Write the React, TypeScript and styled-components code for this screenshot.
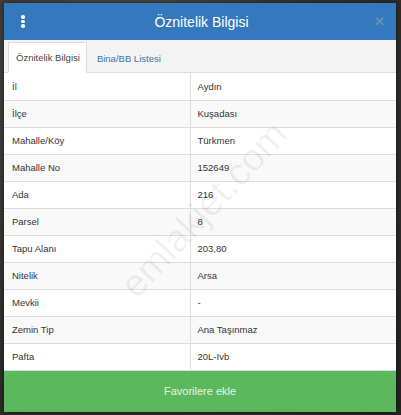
import React from "react";
import styled, { createGlobalStyle } from "styled-components";

const GlobalStyle = createGlobalStyle`
  html, body {
    margin: 0;
    padding: 0;
  }
  body {
    width: 401px;
    height: 415px;
    overflow: hidden;
    font-family: "Liberation Sans", Arial, sans-serif;
    background: radial-gradient(ellipse at 30% 20%, #5a5450 0%, #3a3634 45%, #262422 100%);
  }
`;

const rows: [string, string][] = [
  ["İl", "Aydın"],
  ["İlçe", "Kuşadası"],
  ["Mahalle/Köy", "Türkmen"],
  ["Mahalle No", "152649"],
  ["Ada", "216"],
  ["Parsel", "8"],
  ["Tapu Alanı", "203,80"],
  ["Nitelik", "Arsa"],
  ["Mevkii", "-"],
  ["Zemin Tip", "Ana Taşınmaz"],
  ["Pafta", "20L-Ivb"],
];

const Panel = styled.div`
  position: relative;
  margin: 3px 5px 0 4px;
  width: 392px;
  background: #fff;
  box-shadow: 0 0 6px rgba(0, 0, 0, 0.6);
`;

const Header = styled.div`
  height: 37px;
  background: #3479bd;
  display: flex;
  align-items: center;
  justify-content: space-between;
  padding: 0 10px 0 17px;
`;

const Title = styled.div`
  color: #fff;
  font-size: 14px;
  flex: 1;
  text-align: center;
  padding-left: 4px;
`;

const Kebab = styled.div`
  display: flex;
  flex-direction: column;
  gap: 1px;
  width: 4px;
  align-items: center;
`;

const Dot = styled.span`
  width: 3.5px;
  height: 3.5px;
  border-radius: 50%;
  background: #fff;
`;

const Close = styled.div`
  color: #6a8fb8;
  font-size: 13px;
  font-weight: bold;
  line-height: 1;
  padding-right: 1px;
`;

const TabBar = styled.div`
  height: 33px;
  box-sizing: border-box;
  background: #f3f3f3;
  border-bottom: 1px solid #ddd;
  display: flex;
  align-items: flex-end;
  padding-left: 4px;
`;

const Tab = styled.div<{ $active?: boolean }>`
  box-sizing: border-box;
  display: flex;
  align-items: center;
  padding: 0 6px 0 7px;
  font-family: "Liberation Sans", Arial, sans-serif;
  font-size: 9.5px;
  margin-bottom: -1px;
  color: ${(p) => (p.$active ? "#444" : "#3a72ad")};
  background: ${(p) => (p.$active ? "#fff" : "transparent")};
  border: 1px solid ${(p) => (p.$active ? "#ddd" : "transparent")};
  border-bottom: ${(p) => (p.$active ? "1px solid #fff" : "none")};
  height: ${(p) => (p.$active ? "31px" : "30px")};
  padding-left: ${(p) => (p.$active ? "7px" : "9px")};
`;

const Table = styled.table`
  width: 100%;
  border-collapse: collapse;
  font-family: "Liberation Sans", Arial, sans-serif;
  font-size: 9.5px;
  color: #333;
`;

const Row = styled.tr<{ $striped: boolean }>`
  background: ${(p) => (p.$striped ? "#f9f9f9" : "#fff")};
`;

const Cell = styled.td<{ $value?: boolean }>`
  height: 27px;
  box-sizing: border-box;
  padding: 0 8px;
  border-bottom: 1px solid #ddd;
  border-left: ${(p) => (p.$value ? "1px solid #ddd" : "none")};
  width: ${(p) => (p.$value ? "auto" : "186px")};
  padding-left: ${(p) => (p.$value ? "7px" : "8px")};
`;

const AddButton = styled.button`
  display: block;
  width: 100%;
  height: 41px;
  border: none;
  margin: 0;
  background: #5cb85c;
  color: #e4f7e4;
  font-family: "Liberation Sans", Arial, sans-serif;
  font-size: 11px;
  cursor: pointer;
`;

const Watermark = styled.div`
  position: absolute;
  left: 88px;
  top: 185px;
  transform: rotate(-47deg);
  color: rgba(0, 0, 0, 0.06);
  font-family: "Liberation Sans", Arial, sans-serif;
  font-size: 38px;
  pointer-events: none;
`;

export default function App() {
  return (
    <>
      <GlobalStyle />
      <Panel>
        <Header>
          <Kebab>
            <Dot />
            <Dot />
            <Dot />
          </Kebab>
          <Title>Öznitelik Bilgisi</Title>
          <Close>✕</Close>
        </Header>
        <TabBar>
          <Tab $active>Öznitelik Bilgisi</Tab>
          <Tab>Bina/BB Listesi</Tab>
        </TabBar>
        <Table>
          <tbody>
            {rows.map(([k, v], i) => (
              <Row key={k} $striped={i % 2 === 1}>
                <Cell>{k}</Cell>
                <Cell $value>{v}</Cell>
              </Row>
            ))}
          </tbody>
        </Table>
        <AddButton type="button">Favorilere ekle</AddButton>
        <Watermark>emlakjet.com</Watermark>
      </Panel>
    </>
  );
}
